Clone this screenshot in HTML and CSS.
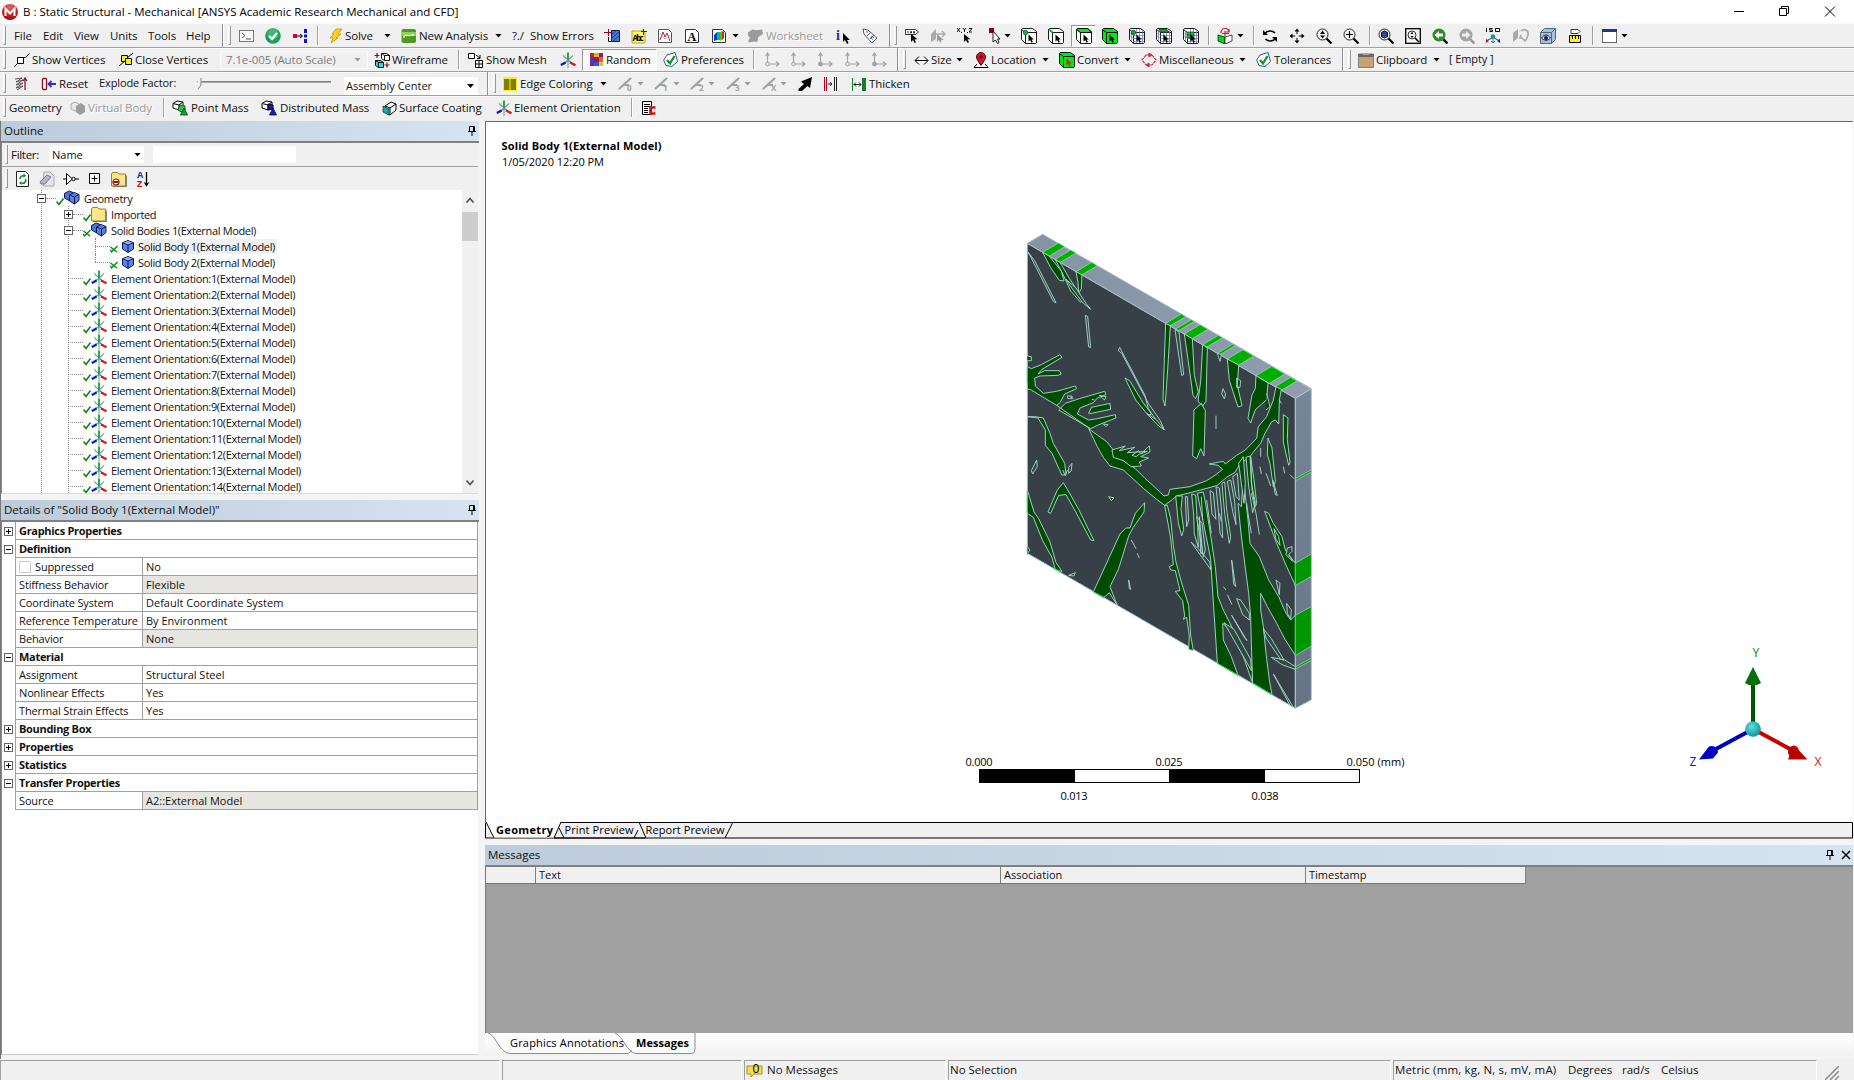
FILE: index.html
```html
<!DOCTYPE html>
<html lang="en">
<head>
<meta charset="utf-8">
<title>B : Static Structural - Mechanical</title>
<link rel="stylesheet" href="styles.css">
</head>
<body>
<svg class="sprite" aria-hidden="true">
  <symbol id="cursor" viewBox="0 0 16 16"><path d="M7 6v8l2-2 1.500 3 1.500-.7-1.500-3h3z" fill="#000"/></symbol>
  <symbol id="term" viewBox="0 0 16 16"><rect x=".5" y="2.500" width="14" height="11" fill="#f8f8f8" stroke="#777"/><path d="M3 5l3 2.500L3 10M7 11h5" fill="none" stroke="#555"/></symbol>
  <symbol id="okball" viewBox="0 0 16 16"><circle cx="8" cy="8" r="7.800" fill="#18a058"/><circle cx="8" cy="6" r="5.500" fill="#3cb878"/><path d="M4 8l3 3 5-6" fill="none" stroke="#fff" stroke-width="2.300"/></symbol>
  <symbol id="nodes" viewBox="0 0 16 16"><path d="M1 6h4v4H1z" fill="#d8002a"/><path d="M5 8h5M8 6l2.500 2L8 10" stroke="#000" fill="none"/><path d="M12 1h3v4h-3zM12 6.500h3v3h-3zM12 11h3v4h-3z" fill="#1010d0"/></symbol>
  <symbol id="bolt" viewBox="0 0 16 16"><path d="M8 1h6l-4 5h3l-5 4h2L3 15l2-5H2l4-4H4z" fill="#ffd21a" stroke="#c08a00" stroke-width=".7"/></symbol>
  <symbol id="newan" viewBox="0 0 16 16"><rect x=".5" y="1" width="14.500" height="14" rx="2" fill="#4f9a22"/><path d="M1 4h14v4H1z" fill="#8fd05a"/><path d="M3 10V8l2-1v1l2-1v1l2-1v1l3-2v2" fill="none" stroke="#fff"/></symbol>
  <symbol id="sect" viewBox="0 0 16 16"><path d="M7.500 2.500h8v11h-8z" fill="#4a74d8" stroke="#123"/><path d="M8 6l5-4M8 10l7-6M9 13l6-5" stroke="#1c3a90"/><path d="M0 4.500h7M4.500 1v7" stroke="#a00020"/><path d="M4.500 9v4.500h3" stroke="#000" fill="none"/></symbol>
  <symbol id="abc" viewBox="0 0 16 16"><path d="M1 3h13v12H1z" fill="#fff36a" stroke="#b8a820"/><text x="1.500" y="13" class="gl-abc" textLength="11">Abc</text><path d="M12.500 1v6M10 3.500h6" stroke="#a00020"/></symbol>
  <symbol id="chart" viewBox="0 0 16 16"><path d="M1.500 1.500h10l3 3v10h-13z" fill="#fff" stroke="#555"/><path d="M3 12l3-8 2 5 2-4 3 8" fill="none" stroke="#c02040"/><path d="M3 5l5 6 5-4" fill="none" stroke="#8890c0" stroke-width=".7"/></symbol>
  <symbol id="abox" viewBox="0 0 16 16"><path d="M1.500 1.500h10l3 3v10h-13z" fill="#fff" stroke="#333"/><text x="3.500" y="13" class="gl-a">A</text></symbol>
  <symbol id="rain" viewBox="0 0 16 16"><path d="M1.500 1.500h10l3 3v10h-13z" fill="#fff" stroke="#333"/><path d="M3 7l3-3v8l-3 1z" fill="#0040e0"/><path d="M6 4h3v8H6z" fill="#00b8a0"/><path d="M9 4l3-1v8l-3 2z" fill="#48c818"/><path d="M11 4l2-1v7l-2 2z" fill="#e02020"/></symbol>
  <symbol id="sheet" viewBox="0 0 17 16"><path d="M1 4l5-3 4 1 6-1 1 5-5 3-1 5H5l-1 1-3-1 2-4-2-3z" fill="#9a9a9a"/></symbol>
  <symbol id="info" viewBox="0 0 16 16"><text x="1" y="12" class="gl-i">i</text><path d="M8 5v9l2-2 2 4 1.500-1-1.500-3h3z" fill="#000"/></symbol>
  <symbol id="tag" viewBox="0 0 16 16"><path d="M1 1l5 1 9 8-5 5-8-9zM4 4l2 0M5 8l4-4M8 11l4-4" fill="#fff" stroke="#555" stroke-width="1"/><path d="M9 8l3 2M8 9.500l3 2" stroke="#3a8ab8"/></symbol>
  <symbol id="tagcur" viewBox="0 0 16 16"><path d="M1.500 1.500h10l3 2.500-3 2.500h-10z" fill="#fff" stroke="#000" stroke-width=".8"/><path d="M4 3v2.500M6.500 3.500h1v1.500h-1zM9.500 3.500h1v1.500h-1z" stroke="#000" stroke-width=".8" fill="none"/><use href="#cursor"/></symbol>
  <symbol id="planecur" viewBox="0 0 16 16"><path d="M1 6l5-5v10l-5 3z" fill="#aaa"/><path d="M6 6h8M12 3l3 3-3 3" fill="none" stroke="#aaa" stroke-width="1.500"/><path d="M7 6v8l2-2 1.500 3 1-3h2z" fill="#999"/></symbol>
  <symbol id="xyzcur" viewBox="0 0 16 16"><path d="M0 0l3 4M3 0L0 4M6 0l1.500 2L9 0M7.500 2v2M12 .5h3l-3 3.500h3M4.500 4v1M10.500 4v1" stroke="#000" stroke-width=".9" fill="none"/><use href="#cursor"/></symbol>
  <symbol id="redcur" viewBox="0 0 16 16"><path d="M1 0h5v5H1z" fill="#8c0010"/><path d="M5 3v11l2.500-2 2 3.500 1.500-1L9.500 11H12z" fill="#fff" stroke="#000" stroke-width=".9"/></symbol>
  <symbol id="arrowhead" viewBox="0 0 16 16"><path d="M7.500 6.500v7l1.700-1.500 1.300 2.700 1.400-.7-1.300-2.500h2.200z"/></symbol>
  <symbol id="cube" viewBox="0 0 16 16"><path d="M.5 1.500l1-1h10l4 3v11l-1 1h-10l-4-4z" fill="#fff" stroke="#000" stroke-width=".9"/><path d="M.5 1.500l4 3h10.500M4.500 4.500v11" fill="none" stroke="#000" stroke-width=".9"/></symbol>
  <symbol id="cubev" viewBox="0 0 16 16"><use href="#cube"/><circle cx="4.500" cy="4.500" r="2.200" fill="#18c030" stroke="#054" stroke-width=".8"/><use href="#arrowhead"/></symbol>
  <symbol id="cubee" viewBox="0 0 16 16"><use href="#cube"/><path d="M1 1.500l3.600 2.800" stroke="#18c030" stroke-width="2.200"/><use href="#arrowhead"/></symbol>
  <symbol id="cubef" viewBox="0 0 16 16"><use href="#cube"/><path d="M.7 1.500l1-1h10l3.600 4h-11z" fill="#00e818" stroke="#000" stroke-width=".9"/><use href="#arrowhead"/></symbol>
  <symbol id="cubeg" viewBox="0 0 16 16"><path d="M.5 1.500l1-1h10l4 3v11l-1 1h-10l-4-4z" fill="#00e818" stroke="#000" stroke-width=".9"/><path d="M.5 1.500l4 3h10.500M4.500 4.500v11" fill="none" stroke="#000" stroke-width=".9"/></symbol>
  <symbol id="cubeb" viewBox="0 0 16 16"><use href="#cubeg"/><use href="#arrowhead"/></symbol>
  <symbol id="cuber" viewBox="0 0 16 16"><use href="#cubeg"/><use href="#arrowhead" fill="#e02010"/></symbol>
  <symbol id="mesh" viewBox="0 0 16 16"><use href="#cube"/><path d="M7.500 1v14M10.500 1v14M13.500 3v12M4 7.500h11M4 10.500h11M4 13.500h11M1 4.500l3 3M1 7.500l3 3M2.500 3v10" stroke="#6870b8" stroke-width=".7"/></symbol>
  <symbol id="meshv" viewBox="0 0 16 16"><use href="#mesh"/><circle cx="4.500" cy="4.500" r="2.200" fill="#18a030" stroke="#054" stroke-width=".8"/><use href="#arrowhead"/></symbol>
  <symbol id="meshf" viewBox="0 0 16 16"><use href="#mesh"/><path d="M3 1.500h8l2 2.500H5z" fill="#18a030" stroke="#043" stroke-width=".7"/><use href="#arrowhead"/></symbol>
  <symbol id="meshb" viewBox="0 0 16 16"><use href="#mesh"/><path d="M4 4h7v6H4zM4 7h7M7.500 4v6" fill="#18c030" stroke="#043" stroke-width=".7"/><use href="#arrowhead"/></symbol>
  <symbol id="rotcube" viewBox="0 0 16 16"><path d="M1 7l7 2v7l-7-3z" fill="#00d818" stroke="#000" stroke-width=".7"/><path d="M8 9l7-2v6l-7 3z" fill="#fff" stroke="#000" stroke-width=".7"/><path d="M4 5a4 4 0 018-1M12 1v3H9M5 5.500h7M8 3v5" fill="none" stroke="#c02030" stroke-width="1.200"/></symbol>
  <symbol id="rot" viewBox="0 0 16 16"><path d="M3 5.500a6 5 0 0110-.5M13.500 10.500a6 5 0 01-10 .5" fill="none" stroke="#000" stroke-width="1.500"/><path d="M1 2v5h5zM15 14V9h-5z" fill="#000"/></symbol>
  <symbol id="pan" viewBox="0 0 16 16"><path d="M8 2v12M2 8h12" stroke="#000"/><path d="M8 .5L5.500 3.500h5zM8 15.500l-2.500-3h5zM.5 8l3-2.500v5zM15.500 8l-3-2.500v5z" fill="#000"/><circle cx="8" cy="8" r="2" fill="#eee"/></symbol>
  <symbol id="lens" viewBox="0 0 16 16"><circle cx="6.500" cy="6.500" r="5.500" fill="#f6f6f6" stroke="#222"/><path d="M10.500 10.500l5 5" stroke="#000" stroke-width="2.200"/></symbol>
  <symbol id="zoomud" viewBox="0 0 16 16"><use href="#lens"/><path d="M6.500 2.500L4 6h5zM6.500 10.500L4 7.500h5z"/></symbol>
  <symbol id="zoomp" viewBox="0 0 16 16"><use href="#lens"/><path d="M6.500 3v7M3 6.500h7" stroke="#000" stroke-width="1.200"/></symbol>
  <symbol id="zoomfit" viewBox="0 0 16 16"><use href="#lens"/><path d="M3.500 4.500l3-1.500 3 1.500v4l-3 1.500-3-1.500z" fill="#3048a0" stroke="#001"/></symbol>
  <symbol id="zoombox" viewBox="0 0 16 16"><rect x=".7" y=".7" width="14.600" height="14.600" fill="#f6f6f6" stroke="#000" stroke-width="1.300"/><circle cx="7" cy="7" r="4" fill="none" stroke="#333"/><path d="M10 10l4 4" stroke="#000" stroke-width="1.600"/><path d="M7 4L5.500 6h3zM7 10L5.500 8h3z"/></symbol>
  <symbol id="zoomback" viewBox="0 0 16 16"><path d="M10.500 10.500l5 5" stroke="#111" stroke-width="2.500"/><circle cx="7" cy="7" r="6.500" fill="#2c8a28"/><path d="M2.500 7L7 3v2.500h4v3H7V11z" fill="#fff"/></symbol>
  <symbol id="zoomfwd" viewBox="0 0 16 16"><path d="M10.500 10.500l5 5" stroke="#999" stroke-width="2.500"/><circle cx="7" cy="7" r="6.500" fill="#a4a4a4"/><path d="M11.500 7L7 3v2.500H3v3h4V11z" fill="#eee"/></symbol>
  <symbol id="iso" viewBox="0 0 16 16"><path d="M1.500 0v4M7.500.5h-3V2h3v1.500h-3M10.500.5h4v3h-4z" fill="none" stroke="#000"/><path d="M8 9v6M6 13l2 2 2-2" stroke="#10a050" fill="none"/><path d="M7 10l-6 3M9 10l6 3" stroke="#303090"/><path d="M1 11v4l3-2z" fill="#c01020"/><path d="M15 11v4l-3-2z" fill="#1020c0"/><circle cx="8" cy="8.500" r="2.200" fill="#109890"/></symbol>
  <symbol id="face" viewBox="0 0 16 16"><path d="M0 5l5-4v9l-5 4z" fill="#aaa"/><path d="M8 3c3-3 8-1 7 4-1 2-1 4-3 6l-3-3-2 0 1-3" fill="none" stroke="#aaa" stroke-width="1.700"/></symbol>
  <symbol id="eye" viewBox="0 0 16 16"><path d="M.5 4.500l4-4h11v11l-4 4H.500z" fill="#a8c0e0" stroke="#567"/><path d="M.5 4.500h11v11M11.500 4.500l4-4" stroke="#567" fill="none"/><path d="M1.500 10c3-4 6-4 9 0-3 3-6 3-9 0z" fill="#dde" stroke="#124"/><circle cx="6" cy="10" r="2" fill="#124"/></symbol>
  <symbol id="ruler" viewBox="0 0 16 16"><path d="M4 1.500h7l2 2-2 2H4z" fill="#fff" stroke="#333"/><path d="M2.500 7.500h11v7h-11z" fill="#ffee20" stroke="#000"/><path d="M5.500 8v3M8.500 8v3M11.500 8v3" stroke="#000"/></symbol>
  <symbol id="win" viewBox="0 0 16 16"><rect x=".5" y="1.500" width="14" height="13" fill="#fff" stroke="#666"/><path d="M0 1h15v3H0z" fill="#203880"/></symbol>

  <symbol id="vert" viewBox="0 0 16 16"><path d="M3.500 5.500h6v6h-6z" fill="#fff" stroke="#000"/><path d="M9.500 5.500h2l4-4M3.500 11.500l-3 3" fill="none" stroke="#000"/></symbol>
  <symbol id="cvert" viewBox="0 0 16 16"><path d="M3.500 3.500h6v6h-6z" fill="#ffee20" stroke="#000"/><path d="M7.500 6.500h6v6h-6z" fill="#ffee20" stroke="#000"/><path d="M9 6l6-5M7 9l-6 5" stroke="#000"/></symbol>
  <symbol id="wire" viewBox="0 0 16 16"><path d="M7.500 1.500h5l3 2v5h-5l-3-2zM10.500 3.500h5M10.500 3.500v5M7.500 1.500l3 2" fill="#fff" stroke="#000" stroke-width=".9"/><path d="M1.500 8.500h5l3 2v5h-5l-3-2z" fill="#30e0e0" stroke="#000" stroke-width=".9"/><path d="M1.500 8.500l3 2h5M4.500 10.500v5" stroke="#000" fill="none" stroke-width=".9"/><path d="M3 1v5M.5 3.500h5M13 10.500v5M10.500 13h5" stroke="#a00020" stroke-width="1.200"/></symbol>
  <symbol id="shmesh" viewBox="0 0 16 16"><path d="M.5 1.500h6v5h-6zM7.500 8.500h7v7h-7zM11 8.500v7M7.500 12h7" fill="#fff" stroke="#000"/><path d="M8 3l4 3M12 3v3.500H9" stroke="#000" fill="none"/></symbol>
  <symbol id="triad" viewBox="0 0 16 16"><path d="M3 3.500l10 8.500M13 3.500L4 12M8 9v7" stroke="#8a9a9e" stroke-width="1.100"/><path d="M8 9V.5" stroke="#18a848" stroke-width="1.900"/><path d="M8 8.500L4 11M8 8.500l3 2" stroke="#20c0a0" stroke-width="1.400"/><path d="M5.500 10.500L.8 13" stroke="#1010c8" stroke-width="2.300"/><path d="M10 10.500l5.500 2.800" stroke="#d81818" stroke-width="2.200"/></symbol>
  <symbol id="rand" viewBox="0 0 13 13"><path d="M0 0h4v4H0z" fill="#d02020"/><path d="M4 0h5v4H4z" fill="#e0b020"/><path d="M9 0h4v4H9z" fill="#802080"/><path d="M0 4h4v5H0z" fill="#3040d0"/><path d="M4 4h5v5H4z" fill="#b01040"/><path d="M9 4h4v5H9z" fill="#e86020"/><path d="M0 9h4v4H0z" fill="#802090"/><path d="M4 9h5v4H4z" fill="#2060e0"/><path d="M9 9h4v4H9z" fill="#e8c030"/></symbol>
  <symbol id="pref" viewBox="0 0 16 16"><path d="M4 3l8-2.500 2.500 9L9 14.500l-6-1L.7 8z" fill="#fff" stroke="#2a5a90"/><path d="M4 8l3 3.500L11.500 4" fill="none" stroke="#109020" stroke-width="2.200"/></symbol>
  <symbol id="axes" viewBox="0 0 16 16"><path d="M3.500 2v10M3.500 12H14M1.500 4l2-3 2 3M12 9.500l3 2.500-3 2.500" fill="none" stroke="#a2a2a2" stroke-width="1.200"/><circle cx="3.500" cy="12" r="1.800" fill="#eee" stroke="#a2a2a2"/></symbol>
  <symbol id="axesf" viewBox="0 0 16 16"><use href="#axes"/><circle cx="3.500" cy="12" r="2.200" fill="#a2a2a2"/></symbol>
  <symbol id="size" viewBox="0 0 16 16"><path d="M1 8.500h13M5 4.500l-4 4 4 4M10 4.500l4 4-4 4" fill="none" stroke="#000"/></symbol>
  <symbol id="pin" viewBox="0 0 16 16"><path d="M4 12L1 15.500h14L12 12" fill="#fff" stroke="#000"/><path d="M8 13.500C5 9 3.500 7 3.500 5a4.500 4.500 0 019 0c0 2-1.500 4-4.500 8.500z" fill="#d01838" stroke="#500"/><circle cx="8" cy="5" r="1.700" fill="#500"/></symbol>
  <symbol id="misc" viewBox="0 0 16 16"><path d="M5 3L1 8l4 5M11 3l4 5-4 5" fill="none" stroke="#d02840" stroke-dasharray="3 .7" stroke-width="1.200"/><path d="M5 3h3M8 1v4l3-2zM11 13H8M8 11v4l-3-2z" fill="#d02840" stroke="#d02840"/></symbol>
  <symbol id="clip" viewBox="0 0 16 16"><path d="M.5 2h15v13.500H.500z" fill="#c8a078" stroke="#8a8078"/><path d="M.5 2h15v3H.500z" fill="#666"/><path d="M5 1h6v2H5z" fill="#aaa"/></symbol>

  <symbol id="spring" viewBox="0 0 16 16"><path d="M2 3l7-1-6 4 7-2-7 5 7-2-7 5 7-2-6 4" fill="none" stroke="#444" stroke-width=".9"/><path d="M12 14V3M10 5l2-3 2 3" stroke="#a01020" fill="none" stroke-width="1.300"/></symbol>
  <symbol id="reset" viewBox="0 0 16 16"><rect x="1.500" y="2.500" width="4" height="11" rx="1" fill="#fff" stroke="#901020" stroke-width="1.300"/><path d="M7 8h8M10.500 5L7.500 8l3 3" fill="none" stroke="#3030c0" stroke-width="1.800"/></symbol>
  <symbol id="edgec" viewBox="0 0 16 16"><path d="M1 1h14v14H1z" fill="#f2f21a"/><path d="M2 3h5.500v11H2zM8.500 3H14v11H8.500z" fill="#808000"/></symbol>
  <symbol id="stroke" viewBox="0 0 16 16"><path d="M1 13L13 2M6 9h5" stroke="#a2a2a2" stroke-width="2.200"/></symbol>
  <symbol id="s0" viewBox="0 0 16 16"><use href="#stroke"/><text x="9" y="15" class="gl-n">0</text></symbol>
  <symbol id="s1" viewBox="0 0 16 16"><use href="#stroke"/><text x="9" y="15" class="gl-n">1</text></symbol>
  <symbol id="s2" viewBox="0 0 16 16"><use href="#stroke"/><text x="9" y="15" class="gl-n">2</text></symbol>
  <symbol id="s3" viewBox="0 0 16 16"><use href="#stroke"/><text x="9" y="15" class="gl-n">3</text></symbol>
  <symbol id="sx" viewBox="0 0 16 16"><use href="#stroke"/><text x="9" y="15" class="gl-n">X</text></symbol>
  <symbol id="dart" viewBox="0 0 16 16"><path d="M15 1l-2 11-2.500-2L5 15H1.500v-2L7 8 4 5.500z" fill="#000"/></symbol>
  <symbol id="gap" viewBox="0 0 16 16"><path d="M1.500 1v14M3.500 1v14" stroke="#b00020"/><path d="M11.500 1v14M13.500 1v14M5 8h4M7 6l2 2-2 2" stroke="#222" fill="none"/></symbol>
  <symbol id="thick" viewBox="0 0 16 16"><path d="M3 8.500h7M5 6.500l-2 2 2 2M8 6.500l2 2-2 2" stroke="#222" fill="none"/><path d="M11 2h4v13h-4z" fill="#108020"/><path d="M1.500 2v13" stroke="#108020"/></symbol>

  <symbol id="vbody" viewBox="0 0 16 16"><path d="M1 4l4-2 4 2v5l-4 2-4-2z" fill="#e8e8e8" stroke="#aaa"/><path d="M6 6l5-3 4 3v6l-5 3-4-3z" fill="#9c9c9c"/></symbol>
  <symbol id="obox" viewBox="0 0 16 16"><path d="M1 3.500L5 1l6 1v6L7 10 1 8zM1 3.500L7 5l4-3M7 5v5" fill="#fff" stroke="#000"/></symbol>
  <symbol id="pmass" viewBox="0 0 16 16"><use href="#obox"/><path d="M8 5l5 1v4l-4 2-3-2z" fill="#30c838" stroke="#063"/><path d="M12 8l3.500 7h-7z" fill="#10a828" stroke="#022" stroke-width=".7"/></symbol>
  <symbol id="dmass" viewBox="0 0 16 16"><use href="#obox"/><path d="M7 4l5 1v4l-5 1z" fill="#1818c0" stroke="#003"/><path d="M12 8l3.500 7h-7z" fill="#1818c0" stroke="#003" stroke-width=".7"/></symbol>
  <symbol id="scoat" viewBox="0 0 16 16"><path d="M3 6l6-4 5 2v6l-6 5-5-3zM3 6l5 2 6-4M8 8v7" fill="#fff" stroke="#000"/><path d="M1 6l6 3v6l-6-3z" fill="#18a8a0" stroke="#033" stroke-width=".7"/></symbol>
  <symbol id="cmd" viewBox="0 0 16 16"><path d="M1.500 1.500h9v13h-9z" fill="#fff" stroke="#000"/><path d="M3 4.500h6M3 6.500h6M3 8.500h4M3 10.500h4M3 12.500h4" stroke="#000"/><path d="M14.500 7.500H9.500v6h5" fill="none" stroke="#e01010" stroke-width="2.600"/></symbol>

  <symbol id="refresh" viewBox="0 0 16 16"><path d="M1.500 .5h9l3 3v12h-12z" fill="#fff" stroke="#222"/><path d="M5 8a3 3 0 014-3M10.500 8a3 3 0 01-4 4" fill="none" stroke="#108828" stroke-width="1.600"/><path d="M8.500 2.500v4.500l2.500-2.500zM6.500 14v-4l-2.500 2z" fill="#108828"/></symbol>
  <symbol id="erase" viewBox="0 0 16 16"><path d="M5 1h6l4 4v10H4z" fill="#e4e4ea" stroke="#aaa"/><path d="M1 11l7-7 4 2-6 7-4 0z" fill="#b4b8c8" stroke="#778"/></symbol>
  <symbol id="tri" viewBox="0 0 16 16"><path d="M3.500 2.500v11l6-5.500zM0 8h3M12 8h4" fill="#fff" stroke="#000"/><circle cx="10.500" cy="8" r="1.700" fill="#fff" stroke="#000"/></symbol>
  <symbol id="plusbox" viewBox="0 0 16 16"><path d="M2.500 2.500h10v10h-10zM7.500 4.500v6M4.500 7.500h6" fill="#fff" stroke="#000"/></symbol>
  <symbol id="folder" viewBox="0 0 16 16"><path d="M.5 3l1-1.500h5L8 3h6.500v12H.500z" fill="#fbe68a" stroke="#a08020"/><path d="M15.500 4.500v11H2" fill="none" stroke="#665" stroke-width=".8"/></symbol>
  <symbol id="folderx" viewBox="0 0 16 16"><use href="#folder"/><circle cx="5" cy="11" r="3" fill="#fff" stroke="#801020" stroke-width="1.200"/><path d="M3 11h4" stroke="#801020" stroke-width="2"/></symbol>
  <symbol id="az" viewBox="0 0 16 16"><text x="2" y="7" class="gl-az blue">A</text><text x="2" y="15.500" class="gl-az red">Z</text><path d="M11.500 1v13M9.500 11.500l2 3 2-3" stroke="#000" stroke-width="1.300" fill="none"/></symbol>
  <symbol id="body" viewBox="0 0 16 16"><path d="M8 2.500l5.500 2.200v6.300L8 14.500l-5.500-3.500V4.700z" fill="#5a82e8" stroke="#0a1a50"/><path d="M2.500 4.700L8 7l5.500-2.300M8 7v7.500" fill="none" stroke="#0a1a50"/><path d="M3.500 4.700L8 3l4.500 1.700L8 6.300z" fill="#90b0f8"/></symbol>
  <symbol id="bodies" viewBox="0 0 16 16"><path d="M.5 3.500L5 1l4 1.500v6l-4 2-4.500-2.500z" fill="#4a72d8" stroke="#0a1a50"/><path d="M5.500 5L10 2.500l5 2v6L10.500 14l-5-3z" fill="#5a82e8" stroke="#0a1a50"/><path d="M5.500 5l5 2L15 4.500M10.500 7v7" fill="none" stroke="#0a1a50"/></symbol>
  <symbol id="chk" viewBox="0 0 8 16"><path d="M.5 11.500l2.500 3 4.500-6" fill="none" stroke="#118a18" stroke-width="1.700"/></symbol>
  <symbol id="chx" viewBox="0 0 8 16"><path d="M.5 9l6.500 5M7.500 8L1 14.500M0 12l2 2" fill="none" stroke="#118a18" stroke-width="1.500"/></symbol>
  <symbol id="tack" viewBox="0 0 10 12"><path d="M2.500 1.500h5v5h-5zM6.500 1.500v5M1 6.500h8M5 7v4" fill="none" stroke="#000"/></symbol>
</svg>

<div class="app">
  <header class="title">
    <svg class="logo" viewBox="0 0 16 16"><defs><radialGradient id="redball" cx=".5" cy=".2" r=".8"><stop offset="0" stop-color="#e86060"/><stop offset="1" stop-color="#a80008"/></radialGradient></defs><circle cx="8" cy="8" r="8" fill="url(#redball)"/><path d="M3.500 12V4.500L8 9.500l4.500-5V12" fill="none" stroke="#fff" stroke-width="2"/></svg>
    <span class="caption">B : Static Structural - Mechanical [ANSYS Academic Research Mechanical and CFD]</span>
    <svg class="winctl" viewBox="0 0 102 12"><path d="M0 6.500h10M45.500 3.500h7v7h-7zM47.500 3v-1.500h7v7H53M91 1.500l10 10M101 1.500l-10 10" fill="none" stroke="#000"/></svg>
  </header>

  <div class="bar bar1">
    <i class="grip"></i><span>File</span><span>Edit</span><span>View</span><span>Units</span><span>Tools</span><span>Help</span><i class="end"></i><i class="grip"></i>
    <svg><use href="#term"/></svg><svg><use href="#okball"/></svg><svg><use href="#nodes"/></svg><i class="sep"></i>
    <svg><use href="#bolt"/></svg><span>Solve</span><i class="caret"></i><svg><use href="#newan"/></svg><span>New Analysis</span><i class="caret"></i>
    <span>?./</span><span>Show Errors</span><svg><use href="#sect"/></svg><svg><use href="#abc"/></svg><svg><use href="#chart"/></svg><svg><use href="#abox"/></svg><svg><use href="#rain"/></svg><i class="caret"></i>
    <svg><use href="#sheet"/></svg><span class="off">Worksheet</span><svg><use href="#info"/></svg><svg><use href="#tag"/></svg><i class="end"></i><i class="grip"></i>
    <svg><use href="#tagcur"/></svg><svg><use href="#planecur"/></svg><svg><use href="#xyzcur"/></svg><svg><use href="#redcur"/></svg><i class="caret"></i>
    <svg><use href="#cubev"/></svg><svg><use href="#cubee"/></svg><b class="pressed face"><svg><use href="#cubef"/></svg></b><svg><use href="#cubeb"/></svg><svg><use href="#meshv"/></svg><svg><use href="#meshf"/></svg><svg><use href="#meshb"/></svg><i class="sep"></i>
    <svg><use href="#rotcube"/></svg><i class="caret"></i><i class="sep"></i><svg><use href="#rot"/></svg><svg><use href="#pan"/></svg><svg><use href="#zoomud"/></svg><svg><use href="#zoomp"/></svg><i class="sep"></i>
    <svg><use href="#zoomfit"/></svg><svg><use href="#zoombox"/></svg><svg><use href="#zoomback"/></svg><svg><use href="#zoomfwd"/></svg><svg><use href="#iso"/></svg><svg><use href="#face"/></svg><svg><use href="#eye"/></svg><svg><use href="#ruler"/></svg><i class="sep"></i><svg><use href="#win"/></svg><i class="caret"></i>
  </div>

  <div class="bar bar2">
    <i class="grip"></i><svg><use href="#vert"/></svg><span>Show Vertices</span><svg><use href="#cvert"/></svg><span>Close Vertices</span>
    <div class="scale"><span>7.1e-005 (Auto Scale)</span><i class="caret dim"></i></div>
    <svg><use href="#wire"/></svg><span>Wireframe</span><i class="sep"></i><svg><use href="#shmesh"/></svg><span>Show Mesh</span><svg><use href="#triad"/></svg>
    <b class="pressed random"><svg><use href="#rand"/></svg><span>Random</span></b><svg><use href="#pref"/></svg><span>Preferences</span><i class="sep"></i>
    <svg><use href="#axes"/></svg><svg><use href="#axes"/></svg><svg><use href="#axesf"/></svg><svg><use href="#axes"/></svg><svg><use href="#axesf"/></svg><i class="end"></i><i class="grip"></i>
    <svg><use href="#size"/></svg><span>Size</span><i class="caret"></i><svg><use href="#pin"/></svg><span>Location</span><i class="caret"></i><svg><use href="#cuber"/></svg><span>Convert</span><i class="caret"></i><svg><use href="#misc"/></svg><span>Miscellaneous</span><i class="caret"></i><svg><use href="#pref"/></svg><span>Tolerances</span><i class="end"></i><i class="grip"></i>
    <svg><use href="#clip"/></svg><span>Clipboard</span><i class="caret"></i><span class="small">[ Empty ]</span>
  </div>

  <div class="bar bar3">
    <i class="grip"></i><svg><use href="#spring"/></svg><svg><use href="#reset"/></svg><span>Reset</span><span class="small">Explode Factor:</span>
    <svg class="slider" viewBox="0 0 142 20"><path d="M4 7.500h134" stroke="#808080"/><path d="M4 8.500h134" stroke="#aaa"/><path d="M4.500 4h4v7l-3 4h-1z" fill="#f0f0f0"/><path d="M8 4v7l-3 4" fill="none" stroke="#808080"/></svg>
    <div class="combo center"><span>Assembly Center</span><i class="caret"></i></div><i class="end"></i><i class="grip"></i>
    <svg><use href="#edgec"/></svg><span>Edge Coloring</span><i class="caret"></i>
    <svg><use href="#s0"/></svg><i class="caret dim"></i><svg><use href="#s1"/></svg><i class="caret dim"></i><svg><use href="#s2"/></svg><i class="caret dim"></i><svg><use href="#s3"/></svg><i class="caret dim"></i><svg><use href="#sx"/></svg><i class="caret dim"></i>
    <svg><use href="#dart"/></svg><svg><use href="#gap"/></svg><svg><use href="#thick"/></svg><span>Thicken</span>
  </div>

  <div class="bar bar4">
    <i class="grip"></i><span>Geometry</span><svg><use href="#vbody"/></svg><span class="off">Virtual Body</span><i class="sep"></i><svg><use href="#pmass"/></svg><span>Point Mass</span><svg><use href="#dmass"/></svg><span>Distributed Mass</span><svg><use href="#scoat"/></svg><span>Surface Coating</span><svg><use href="#triad"/></svg><span>Element Orientation</span><i class="sep"></i><svg><use href="#cmd"/></svg>
  </div>

  <main class="work">
    <aside class="left">
      <div class="phead"><span>Outline</span><svg class="tack"><use href="#tack"/></svg></div>
      <div class="filter"><i class="grip"></i><span>Filter:</span><div class="combo name"><span>Name</span><i class="caret"></i></div><div class="query"></div></div>
      <div class="tools"><i class="grip"></i><svg><use href="#refresh"/></svg><svg><use href="#erase"/></svg><svg><use href="#tri"/></svg><svg><use href="#plusbox"/></svg><svg><use href="#folderx"/></svg><svg><use href="#az"/></svg></div>
      <div class="outline">
        <ul class="tree">
          <li class="l1"><i class="exp"></i><i class="dash"></i><svg class="st"><use href="#chk"/></svg><svg><use href="#bodies"/></svg><span>Geometry</span></li>
          <li class="l2"><i class="exp plus"></i><i class="dash"></i><svg class="st"><use href="#chk"/></svg><svg><use href="#folder"/></svg><span>Imported</span></li>
          <li class="l2"><i class="exp"></i><i class="dash"></i><svg class="st"><use href="#chx"/></svg><svg><use href="#bodies"/></svg><span>Solid Bodies 1(External Model)</span></li>
          <li class="l3 leaf"><i class="dash"></i><svg class="st"><use href="#chx"/></svg><svg class="bd"><use href="#body"/></svg><span class="sel">Solid Body 1(External Model)</span></li>
          <li class="l3 leaf last"><i class="dash"></i><svg class="st"><use href="#chx"/></svg><svg class="bd"><use href="#body"/></svg><span>Solid Body 2(External Model)</span></li>
          <li class="l2 leaf"><i class="dash"></i><svg class="st"><use href="#chk"/></svg><svg><use href="#triad"/></svg><span>Element Orientation:1(External Model)</span></li>
          <li class="l2 leaf"><i class="dash"></i><svg class="st"><use href="#chk"/></svg><svg><use href="#triad"/></svg><span>Element Orientation:2(External Model)</span></li>
          <li class="l2 leaf"><i class="dash"></i><svg class="st"><use href="#chk"/></svg><svg><use href="#triad"/></svg><span>Element Orientation:3(External Model)</span></li>
          <li class="l2 leaf"><i class="dash"></i><svg class="st"><use href="#chk"/></svg><svg><use href="#triad"/></svg><span>Element Orientation:4(External Model)</span></li>
          <li class="l2 leaf"><i class="dash"></i><svg class="st"><use href="#chk"/></svg><svg><use href="#triad"/></svg><span>Element Orientation:5(External Model)</span></li>
          <li class="l2 leaf"><i class="dash"></i><svg class="st"><use href="#chk"/></svg><svg><use href="#triad"/></svg><span>Element Orientation:6(External Model)</span></li>
          <li class="l2 leaf"><i class="dash"></i><svg class="st"><use href="#chk"/></svg><svg><use href="#triad"/></svg><span>Element Orientation:7(External Model)</span></li>
          <li class="l2 leaf"><i class="dash"></i><svg class="st"><use href="#chk"/></svg><svg><use href="#triad"/></svg><span>Element Orientation:8(External Model)</span></li>
          <li class="l2 leaf"><i class="dash"></i><svg class="st"><use href="#chk"/></svg><svg><use href="#triad"/></svg><span>Element Orientation:9(External Model)</span></li>
          <li class="l2 leaf"><i class="dash"></i><svg class="st"><use href="#chk"/></svg><svg><use href="#triad"/></svg><span>Element Orientation:10(External Model)</span></li>
          <li class="l2 leaf"><i class="dash"></i><svg class="st"><use href="#chk"/></svg><svg><use href="#triad"/></svg><span>Element Orientation:11(External Model)</span></li>
          <li class="l2 leaf"><i class="dash"></i><svg class="st"><use href="#chk"/></svg><svg><use href="#triad"/></svg><span>Element Orientation:12(External Model)</span></li>
          <li class="l2 leaf"><i class="dash"></i><svg class="st"><use href="#chk"/></svg><svg><use href="#triad"/></svg><span>Element Orientation:13(External Model)</span></li>
          <li class="l2 leaf"><i class="dash"></i><svg class="st"><use href="#chk"/></svg><svg><use href="#triad"/></svg><span>Element Orientation:14(External Model)</span></li>
        </ul>
        <div class="scroll"><svg viewBox="0 0 16 16"><path d="M4.500 10.500l3.500-4 3.500 4" fill="none" stroke="#555" stroke-width="1.800"/></svg><i class="thumb"></i><svg class="down" viewBox="0 0 16 16"><path d="M4.500 5.500l3.500 4 3.500-4" fill="none" stroke="#555" stroke-width="1.800"/></svg></div>
      </div>
      <div class="phead second"><span>Details of "Solid Body 1(External Model)"</span><svg class="tack"><use href="#tack"/></svg></div>
      <div class="details">
        <div class="row head"><i class="exp plus"></i><span>Graphics Properties</span></div>
        <div class="row head"><i class="exp"></i><span>Definition</span></div>
        <div class="row"><span><i class="box"></i>Suppressed</span><span>No</span></div>
        <div class="row ro"><span>Stiffness Behavior</span><span>Flexible</span></div>
        <div class="row"><span>Coordinate System</span><span>Default Coordinate System</span></div>
        <div class="row"><span>Reference Temperature</span><span>By Environment</span></div>
        <div class="row ro"><span>Behavior</span><span>None</span></div>
        <div class="row head"><i class="exp"></i><span>Material</span></div>
        <div class="row"><span>Assignment</span><span>Structural Steel</span></div>
        <div class="row"><span>Nonlinear Effects</span><span>Yes</span></div>
        <div class="row"><span>Thermal Strain Effects</span><span>Yes</span></div>
        <div class="row head"><i class="exp plus"></i><span>Bounding Box</span></div>
        <div class="row head"><i class="exp plus"></i><span>Properties</span></div>
        <div class="row head"><i class="exp plus"></i><span>Statistics</span></div>
        <div class="row head"><i class="exp"></i><span>Transfer Properties</span></div>
        <div class="row ro"><span>Source</span><span>A2::External Model</span></div>
      </div>
    </aside>

    <section class="right">
      <svg class="view" viewBox="486 122 1367 700">
        <defs>
          <radialGradient id="ball" cx=".4" cy=".35" r=".7"><stop offset="0" stop-color="#5fe0e0"/><stop offset="1" stop-color="#0a8f98"/></radialGradient>
          <linearGradient id="topface" x1="0" y1="0" x2="1" y2="0"><stop offset="0" stop-color="#8693a3"/><stop offset="1" stop-color="#909daf"/></linearGradient>
          <linearGradient id="sideface" x1="0" y1="0" x2="0" y2="1"><stop offset="0" stop-color="#76879a"/><stop offset="1" stop-color="#667485"/></linearGradient>
        </defs>
        <text x="501.500" y="149.500" class="vt bold" textLength="160">Solid Body 1(External Model)</text>
        <text x="502" y="165.500" class="vt" textLength="102">1/05/2020 12:20 PM</text>
        <g transform="translate(1010 220) scale(.33333)" stroke-width="3" stroke-linejoin="round">
          <path d="M52 70L856 535V1465L52 1000z" fill="#373f47" stroke="#9fc4d8"/>
          <path d="M52 70L98 43 904 506 856 535z" fill="url(#topface)" stroke="#a8bccb"/>
          <path d="M856 535L904 506V1440L856 1465z" fill="url(#sideface)" stroke="#b4c6d2"/>
          <g fill="#00b000" stroke="#a8e0b8" stroke-width="2">
            <path d="M98 97l47-28 20 11-47 28zM135 118l47-28 16 9-47 28zM198 155l47-28 17 10-47 28zM467 310l47-28 13 8-47 28zM497 327l47-28 9 5-47 28zM523 342l47-28 24 14-47 28zM578 374l47-28 13 7-47 28zM622 400l47-28 8 4-47 28zM652 417l47-28 33 19-47 28zM738 467l47-28 40 23-47 28zM795 500l47-28 19 11-47 28z"/>
            <path fill="#009600" d="M856 776l48-26v6l-48 26zM856 1030l48-28v67l-48 28zM856 1186l48-26v118l-48 29zM856 1341l48-26v6l-48 26z"/>
          </g>
          <g class="grain">
            <path d="M98 97l20 12 36 44 8 30-14-2-26-38zM136 119l14 8 28 48 26 40 14 24-6 8-30-34-22-48zM198 155l18 10-2 40-8 16-2-34z"/>
            <path class="hollow" d="M54 96l20 26 64 126-8-4-60-118zM168 178l30 26 30 46 14 18-24-20-30-40zM226 286l7 3 9 94-6-2zM325 392l10 8 80 150 36 52 12 28-14-14-34-50-10-40-76-144zM639 506l8 16-4 14-8-14zM618 587v40M495 328l12 8 14 128-6 2zM80 720l2 20-14 22-4-10zM186 730l-2 22-8 8v-18z"/>
            <path d="M345 474l14 8 40 66 26 34-10 4-38-46zM410 580l30 20 22 28-16-10z"/>
            <path d="M467 310l14 8-6 100-6 90-4 50-6-20 4-120zM523 342l24 14 6 110 12 50-8 20-8-10-14-100zM578 374l14 10-4 160-10 14-14-14 8-60zM552 570l22-20 12 22-4 136-10-22-12 30-12-8zM622 400l12 4-4 20zM652 417l34 18-4 60 14 62-12 4-26-80zM680 474l12 8-2 20-10 0zM738 467l36 22-4 50-34 30-14 40-8-14 12-70 10-20z"/>
            <path d="M236 626L262 645 290 665 310 690 325 712 375 745 405 775 435 802 462 828 475 825 480 808 540 800 590 782 612 768 638 748 624 736 598 732 640 724 646 732 680 706 706 690 740 655 745 620 770 590 790 540 798 500 814 508 808 540 806 612 796 600 785 605 765 640 752 670 735 690 720 710 690 732 675 757 650 772 620 797 545 817 500 828 488 838 464 856 440 838 400 805 340 750 300 738 280 712 262 680 250 655z"/>
            <path d="M306 690l40-12-18 14 46-10-22 16 60-4-20 8 26-24 2 18-28 14 24 4-28 12 6 12-30 2-24-18-30-10zM366 706l20-14 6 8-14 10z"/>
            <path d="M52 440l12 6 30-12 56-30 6 8-60 36-12 14 20-10h44l6 10-10 4-54 2-16 6 2 24 24 22 40-6 56-16 4 8-36 16-14 26-10 8-80-48H52zM52 408l12 2v12H52M172 528h14v8h-12z"/>
            <path d="M146 570l20-20 42-14 76-22 4 10-26 10-12 14-40 16-8 18 34 18 26-4 54-12 2 10-56 22-20 10zM236 580l8-18 56-12 2 18-58 12zM268 526l20 4-4 10zM246 538l8 2M280 612l14 2-6 6z"/>
            <path d="M140 556l100 70" fill="none"/>
            <path d="M52 590h22l26 4 20 46 10 30 34 60 4 32-12 4-30-66-20-24V630l-22-36zM160 788l12 20 34 60 46 94-10-2-48-90-26-46-22 2-24 54-8-4 28-66zM158 750l8 18 6-18"/>
            <path d="M52 810l20 66 14 20 34 70 18 62 18 26-20-4-10-38-28-50-28-70-18-12zM52 980l8 10-8 10M176 1066l20-8-4 10zM296 830l8 12 8-8z"/>
            <path d="M404 848L402 876 370 922 356 948 326 1046 300 1100 322 1156 298 1118 282 1132 250 1116 330 942 348 924 360 924 376 880z"/>
            <path d="M464 856h8l10 40 8 80 8 50 16 60 22 70 6 90 8 46-14-4 2-40-8-56-10 6 4-10-6-46-22-28 14-2-14-60-14-2-4-10 12-6-8-80z"/>
            <path d="M562 820L580 816 590 870 604 960 616 1040 624 1130 640 1170 670 1230 700 1290 728 1350 726 1384 700 1310 660 1230 638 1210 640 1260 664 1310 684 1366 622 1330 608 1116 602 1016z"/>
            <path d="M684 850L694 860 700 770 714 900 720 970 748 1010 776 1080 806 1130 828 1180 842 1200 856 1186V1306L826 1260 800 1210 772 1160 752 1120V1170L760 1220 768 1300 778 1380 786 1424 728 1390 724 1270 722 1190 716 1120 704 1030 692 930z"/>
            <path d="M764 874l12 6 14 30 26 40 10 40 30 40v66l-26-56-30-70zM792 926l14 24 4 26-12-18z"/>
            <path class="hollow" d="M784 1312l40 8 32 20v8l-40-14zM760 1226l24 30 38 64-10-2-44-64zM680 1136l12 4 26 40v20l-20-16zM642 1208l30 20 50 90 2 34-20-36z"/>
            <path d="M820 584l14 10-2 64 8 70-4 8-16-70zM774 654l12 30 10 100-6 16-10-70-8-26zM770 520l10 40-12 10"/>
            <path d="M686 730l14-20 6 80-4 60-8-60zM708 712l12-4 4 80 12 60-8 30-12-80zM722 710l10 70 8 70-4 10-10-50z"/>
            <path d="M497 828l8 80 10 40 6-20-8-60 4-40zM545 822l6 60 2 60 12 40-2-60-6-96zM636 790l8 90 14 90 4-20-12-80-6-84z"/>
            <path class="hollow" d="M526 830l4 90 6-20-4-70zM560 890l10 60 10 60 6-20-10-80zM600 812l6 70 12 16-8-80zM618 800l6 60 6 80 8 14-4-90-6-60zM652 784l16 90 10 40-4-70-12-64zM668 770l10 60 10 10-6-80zM543 966l60 84-4-24-34-40zM568 890l10 110-6 0zM628 880l6 24M665 1020l12 80-6-8zM652 1124l14 30M640 1100l8 10M665 1186l46 76-8-10zM790 1362l60 100-10-6zM356 1080l6 28-4-2zM364 960l14 26M382 1000l6 14M752 684v26M750 740l4 22M768 760l10 26 4 12M788 780l14 46-6-2zM820 740l4 20M840 764l12 12M832 984l14-4 0 14-10 10 12 20-20-20zM798 1080l12 10-2 34zM830 1150l14 20-2 26-10-16zM808 540l6 10M180 530l10 6M710 850l4 30 10 60M724 820l14 60 10 64M590 840l8 60 6 40M574 830l4 70"/>
          </g>
          <path d="M52 440v50M52 812v66M52 984v20M132 1044l20 12M248 1114l34 20M622 1330l62 36M730 1390l56 34M856 1030v66M856 1186v120" fill="none" stroke="#10e040"/>
        </g>
        <g shape-rendering="crispEdges"><path d="M979.500 769.500h380v13h-380z" fill="#fff" stroke="#000"/><path d="M979 769h96v14h-96zM1169 769h96v14h-96z"/></g>
        <g class="vt"><text x="965.500" y="765.500" textLength="27">0.000</text><text x="1155.500" y="765.500" textLength="27">0.025</text><text x="1346.500" y="765.500" textLength="58">0.050 (mm)</text><text x="1060.500" y="799.500" textLength="27">0.013</text><text x="1251.500" y="799.500" textLength="27">0.038</text></g>
        <path d="M1753 729V683" stroke="#005400" stroke-width="4"/><path d="M1753 667l8 16q-8 5-16 0z" fill="#087008"/>
        <path d="M1753 729l37 20" stroke="#c80000" stroke-width="4"/><path d="M1807 759.500l-19 0 5-14q5 0 6 5z" fill="#d80808"/><path d="M1788 753q0-8 6-7l13 13-16 0z" fill="#b80000"/>
        <path d="M1753 729l-37 20" stroke="#0000c0" stroke-width="4"/><path d="M1699 759.500l10-13q8-2 9 6l-5 6z" fill="#0000c8"/>
        <circle cx="1753" cy="729" r="7.800" fill="url(#ball)"/>
        <text x="1752.500" y="657" class="ax" fill="#109020">Y</text><text x="1814.500" y="766" class="ax" fill="#e02020">X</text><text x="1689.500" y="766" class="ax" fill="#2020c0">Z</text>
      </svg>
      <svg class="sheets" viewBox="0 0 1368 17">
        <path d="M76 .5h1291.500v15.500H.500V0" fill="#f0f0f0" stroke="#000"/><path d="M0 0h76l-7 15.500H8z" fill="#fff"/>
        <path d="M1 0l8 16M69 16L76 0M74 6l5 10M154 0l7 16M149 16l4-8M240 16l8-16M69 16H160" fill="none" stroke="#000"/>
        <text x="11" y="12" class="vt bold" textLength="57">Geometry</text><text x="79.500" y="12" class="vt" textLength="69">Print Preview</text><text x="160.500" y="12" class="vt" textLength="79">Report Preview</text>
      </svg>
      <div class="phead msg"><span>Messages</span><svg class="tack"><use href="#tack"/></svg><svg class="x" viewBox="0 0 10 10"><path d="M1 1l8 8M9 1L1 9" stroke="#000" stroke-width="1.500"/></svg></div>
      <div class="log"><div class="cols"><span></span><span>Text</span><span>Association</span><span>Timestamp</span></div></div>
      <svg class="btabs" viewBox="485 1033 1368 23">
        <path d="M488 1033c8 2 11 20 22 20.500h118l4-3M615 1033c8 3 12 20 21 20.500h55q4 0 4-4V1033" fill="#fafafa" stroke="#8c8c8c"/>
        <text x="510" y="1047" class="vt" textLength="114">Graphics Annotations</text><text x="636" y="1047" class="vt bold" textLength="53">Messages</text>
      </svg>
    </section>
  </main>

  <footer class="status">
    <div></div><div></div>
    <div><svg class="note" viewBox="0 0 18 16"><path d="M1 4h15v8H8l-3 3v-3H1z" fill="#f8dc50" stroke="#a89030"/><text x="6.500" y="11" class="gl-0">0</text></svg>No Messages</div>
    <div>No Selection</div>
    <div class="units"><span>Metric (mm, kg, N, s, mV, mA)</span><span>Degrees</span><span>rad/s</span><span>Celsius</span></div>
    <svg class="sizer" viewBox="0 0 14 14"><path d="M0 14L14 0M5 14l9-9M10 14l4-4" stroke="#888" stroke-width="1.500"/></svg>
  </footer>
</div>
</body>
</html>
```
FILE: styles.css
```css
* { box-sizing: border-box; }
body { margin: 0; background: #f0f0f0; color: #111; font: 11.5px/16px "Open Sans", "Noto Sans", sans-serif; overflow: hidden; }
svg { display: block; flex: none; }
span { white-space: nowrap; }
.sprite { display: none; }
.app { width: 1854px; height: 1080px; display: flex; flex-direction: column; }

.title { height: 23px; background: #fff; display: flex; align-items: center; padding: 0 18px 0 2px; }
.logo { width: 16px; height: 16px; margin-right: 5px; }
.caption { flex: 1; color: #000; padding-top: 1px; }
.winctl { width: 102px; height: 12px; margin-bottom: 2px; }

.bar { height: 24px; display: grid; align-items: center; padding-left: 3px; border-bottom: 1px solid #a0a0a0; box-shadow: inset 0 1px #fafafa; white-space: nowrap; letter-spacing: -.1px; }
.bar svg { width: 16px; height: 16px; }
.bar > span { overflow: visible; width: 0; }
.bar1 { height: 25px; padding-top: 1px; grid-template-columns: 11px 29px 31px 36px 38px 38px 36px 6px 11px 26px 27px 25px 11px 17px 39px 17px 18px 76px 17px 18px 74px 27px 26px 27px 27px 21px 15px 19px 69px 27px 27px 5px 10px 26px 27px 31px 16px 17px 27px 23px 31px 27px 27px 27px 25px 9px 20px 16px 9px 27px 27px 27px 26px 9px 27px 27px 27px 26px 28px 27px 27px 25px 10px 19px 1fr; }
.bar2 { grid-template-columns: 11px 18px 86px 17px 85px 154px 18px 66px 10px 18px 74px 22px 81px 18px 72px 11px 26px 27px 27px 27px 26px 6px 11px 17px 25px 17px 18px 51px 17px 18px 47px 17px 18px 80px 17px 18px 68px 6px 10px 18px 57px 16px 1fr; }
.bar3 { grid-template-columns: 10px 28px 18px 40px 94px 151px 143px 6px 9px 18px 80px 18px 19px 17px 19px 17px 18px 18px 18px 18px 18px 17px 26px 28px 18px 1fr; }
.bar4 { height: 25px; padding-bottom: 2px; border-bottom: 0; grid-template-columns: 6px 61px 18px 75px 9px 19px 70px 19px 102px 17px 97px 18px 117px 10px 1fr; }
.grip { width: 3px; height: 19px; border-right: 1px solid #999; border-bottom: 1px solid #999; border-left: 1px solid #fff; }
.sep { width: 2px; height: 19px; border-left: 1px solid #a0a0a0; border-right: 1px solid #fff; }
.end { width: 2px; height: 23px; border-left: 1px solid #909090; border-right: 1px solid #fff; }
.caret { width: 7px; height: 4px; background: #000; clip-path: polygon(0 0, 100% 0, 50% 100%); }
.dim { background: #9a9a9a; }
.off { color: #9a9a9a; text-shadow: 1px 1px #fff; }
.small { font-size: 11px; padding-bottom: 2px; }
.pressed { display: flex; align-items: center; background: #f8f8f8; border: 1px solid #999; border-right-color: #fff; border-bottom-color: #fff; font-weight: 400; height: 22px; }
.face { width: 25px; padding-left: 4px; }
.random { width: 75px; padding-left: 7px; gap: 3px; }
.bar .random svg { width: 13px; height: 13px; }
.scale { width: 148px; height: 18px; border: 1px solid #fafafa; color: #7c7c7c; display: flex; align-items: center; justify-content: space-between; padding: 0 6px 0 5px; }
.bar .slider { width: 142px; height: 20px; }
.combo { background: #fff; display: flex; align-items: center; justify-content: space-between; letter-spacing: 0; }
.center { width: 134px; height: 18px; padding: 0 4px 0 2px; font-size: 11px; align-self: end; }

.work { height: 938px; display: flex; background: #f4f4f4; }
.left { width: 485px; border-left: 1px solid #777; display: flex; flex-direction: column; padding: 0 6px 4px 0; }
.phead { height: 22px; background: linear-gradient(90deg, #bdcbda, #d6e3f0); border-bottom: 2px solid #808080; display: flex; align-items: center; padding: 0 2px 0 3px; }
.phead span { flex: 1; }
.tack { width: 10px; height: 12px; }
.filter { height: 24px; background: #f0f0f0; display: flex; align-items: center; padding-left: 3px; border-bottom: 1px solid #a0a0a0; border-left: 1px solid #888; margin-right: 1px; }
.filter > span { margin-left: 3px; width: 38px; letter-spacing: -.3px; }
.name { width: 95px; height: 17px; padding: 0 3px; font-size: 11px; }
.query { width: 143px; height: 17px; background: #fff; margin-left: 9px; }
.tools { height: 23px; background: #f0f0f0; display: flex; align-items: center; gap: 8px; padding-left: 3px; border-left: 1px solid #888; margin-right: 1px; }
.tools svg { width: 16px; height: 16px; }
.tools .grip { margin-right: -1px; }
.outline { height: 304px; background: #fff; display: flex; overflow: hidden; border-left: 1px solid #888; margin-right: 1px; font-size: 11px; border-bottom: 1px solid #ddd; }
.tree { position: relative; flex: 1; margin: 0; padding: 0; list-style: none; overflow: hidden; letter-spacing: -.34px; }
.tree::before, .tree::after { content: ""; position: absolute; top: 0; bottom: 0; left: 39px; border-left: 1px dotted #888; }
.tree::after { left: 66px; top: 16px; }
.tree li { position: relative; z-index: 1; height: 16px; display: flex; align-items: center; }
.tree svg { width: 16px; height: 16px; }
.tree .st { width: 8px; }
.tree .bd { width: 18px; padding-left: 2px; margin-right: -2px; }
.tree span { padding: 0 2px; margin-left: 2px; line-height: 15px; }
.exp { position: relative; flex: none; width: 9px; height: 9px; border: 1px solid #666; background: linear-gradient(#000, #000) center / 5px 1px no-repeat #fff; }
.plus { background: linear-gradient(#000, #000) center / 5px 1px no-repeat, linear-gradient(#000, #000) center / 1px 5px no-repeat #fff; }
.dash { width: 10px; border-top: 1px dotted #888; flex: none; }
.leaf .dash { width: 15px; }
.l1 { padding-left: 35px; }
.l2 { padding-left: 62px; }
.l2.leaf { padding-left: 66px; }
.l3.leaf { margin-left: 93px; }
.l3::before { content: ""; position: absolute; left: 0; top: 0; height: 16px; border-left: 1px dotted #888; }
.l3.last::before { height: 8px; }
.sel { background: #f0f0f0; }
.scroll { width: 16px; background: #f0f0f0; display: flex; flex-direction: column; }
.scroll svg { width: 16px; height: 20px; }
.thumb { height: 29px; margin: 2px 0 0; background: #cdcdcd; }
.scroll .down { margin: auto 0 -3px; height: 26px; }
.second { margin-top: 6px; }
.details { flex: 1; background: #fff; border-left: 1px solid #888; margin-right: 1px; font-size: 11px; border-bottom: 1px solid #ccc; }
.row { height: 18px; display: grid; grid-template-columns: 126px 1fr; margin-left: 13px; border: solid #a0a0a0; border-width: 0 1px 1px 1px; }
.row span { padding-left: 3px; line-height: 17px; display: flex; align-items: center; letter-spacing: -.14px; }
.row span + span { border-left: 1px solid #a0a0a0; letter-spacing: 0; }
.row.head { margin-left: 2px; border-left: 0; grid-template-columns: 11px 1fr; font-weight: 700; border-bottom: 0; align-items: center; }
.row.head span { border-left: 1px solid #a0a0a0; border-bottom: 1px solid #a0a0a0; height: 18px; letter-spacing: -.3px; }
.ro span + span { background: #e7e5e2; }
.box { width: 12px; height: 12px; border: 1px solid #ccc; margin-right: 4px; }

.right { width: 1369px; display: flex; flex-direction: column; padding-right: 1px; }
.view { width: 1368px; height: 701px; background: #fff; border: solid #696969; border-width: 1px 0 0 1px; }
.vt { font-size: 11px; fill: #000; }
.bold { font-weight: 700; }
.ax { font: 12px "Noto Sans", sans-serif; }
.grain path { fill: #004c00; stroke: #a9d6cf; stroke-width: 2.8px; }
.grain .hollow { fill: #2f4a40; }
.sheets { width: 1368px; height: 17px; }
.msg { margin-top: 6px; height: 22px; gap: 6px; padding-right: 2px; }
.x { width: 10px; height: 10px; }
.log { height: 166px; background: #a0a0a0; border-left: 1px solid #777; }
.cols { height: 17px; width: 1040px; display: grid; grid-template-columns: 50px 465px 305px 220px; background: #f0f0f0; border-bottom: 1px solid #777; }
.cols span { border-right: 1px solid #808080; padding-left: 3px; line-height: 16px; font-size: 11px; }
.btabs { width: 1368px; height: 23px; background: linear-gradient(#fff, #f2f2f2); }

.status { height: 21px; display: grid; grid-template-columns: 500px 240px 202px 443px 424px 20px; gap: 2px 2px; padding-top: 1px; align-items: stretch; }
.status > div { border: solid #a0a0a0; border-width: 1px 0 0 1px; border-right: 1px solid #fff; padding: 0 0 1px 1px; display: flex; align-items: center; white-space: nowrap; }
.note { width: 18px; height: 16px; margin-right: 3px; overflow: visible; }
.units span:nth-child(1) { width: 173px; letter-spacing: .16px; }
.units span:nth-child(2) { width: 54px; }
.units span:nth-child(3) { width: 39px; }
.sizer { width: 14px; height: 14px; align-self: end; justify-self: end; }

.gl-abc { font: 700 8px "Open Sans", sans-serif; }
.gl-a { font: 700 12px "Liberation Serif", serif; }
.gl-i { font: 700 14px "Liberation Serif", serif; fill: #1030c0; }
.gl-n { font: 700 8px "Open Sans", sans-serif; fill: #a2a2a2; }
.gl-az { font: 700 9px "Open Sans", sans-serif; }
.gl-0 { font: 12px "Open Sans", sans-serif; }
.blue { fill: #2040a0; }
.red { fill: #c01020; }
```
